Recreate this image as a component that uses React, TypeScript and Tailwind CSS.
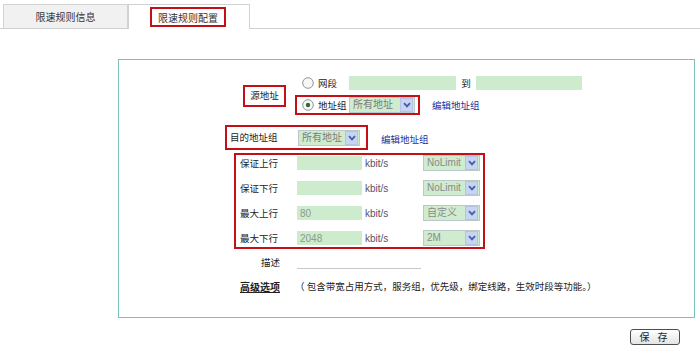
import React from 'react'

const font = { fontFamily: '"Noto Sans CJK SC", "Liberation Sans", sans-serif' }

function Radio({ checked }: { checked?: boolean }) {
  return (
    <svg width="12" height="12" viewBox="0 0 12 12" className="shrink-0">
      <circle cx="6" cy="6" r="5.3" fill="#f7f7f7" stroke="#7d8a96" strokeWidth="0.9" />
      {checked && <circle cx="6" cy="6" r="2.2" fill="#2f6b2f" />}
    </svg>
  )
}

function Select({ value, width, gray }: { value: string; width: string; gray?: boolean }) {
  return (
    <div className={`flex items-center h-[16px] bg-[#cfeccf] border border-[#b9c9c9] ${width}`}>
      <span className={`flex-1 pl-[3px] text-[10px] leading-none ${gray ? 'text-[#8a8a8a]' : 'text-[#7a7a7a]'}`} style={{ fontFamily: '"Liberation Sans", "Noto Sans CJK SC", sans-serif' }}>
        {value}
      </span>
      <span className="flex items-center justify-center w-[13px] h-[14px] mr-px bg-[#c9d5f0] border border-[#b4c3e4]">
        <svg width="8" height="6" viewBox="0 0 8 6">
          <polyline points="1,1.2 4,4.4 7,1.2" fill="none" stroke="#3f5fae" strokeWidth="1.8" />
        </svg>
      </span>
    </div>
  )
}

function RateRow({ label, value, sel }: { label: string; value: string; sel: string }) {
  return (
    <div className="flex items-center h-[16px]">
      <span className="ml-[4px] w-[57px] text-[9.5px] text-[#222]">{label}</span>
      <div className="w-[65px] h-[14px] bg-[#cdebcd] flex items-center pl-[3px] text-[10px] text-[#8c9c8c]" style={{ fontFamily: '"Liberation Sans", sans-serif' }}>
        {value}
      </div>
      <span className="ml-[3px] w-[58px] text-[10px] text-[#5a4f6a]" style={{ fontFamily: '"Liberation Sans", sans-serif' }}>
        kbit/s
      </span>
      <Select value={sel} width="w-[57px]" gray />
    </div>
  )
}

export default function App() {
  return (
    <div className="w-[700px] h-[348px] bg-white overflow-hidden text-[#222]" style={font}>
      {/* Tabs */}
      <div className="flex items-end h-[29px] pl-[3px] border-b border-[#cfcfcf]">
        <div className="w-[125px] h-[24px] bg-[#f1f1f1] border border-b-0 border-[#d2d2d2] flex items-center justify-center text-[10px] text-[#333]">
          限速规则信息
        </div>
        <div className="w-[122px] h-[25px] -mb-px bg-white border border-b-0 border-[#d2d2d2] flex items-start pt-[2px] pl-[21px]">
          <div className="w-[76px] h-[20px] border-2 border-[#c40f16] flex items-center justify-center text-[10px] text-[#333]">
            限速规则配置
          </div>
        </div>
      </div>

      {/* Panel */}
      <div className="ml-[118px] mt-[30px] w-[577px] h-[259px] border border-[#79c2b9] flex flex-col">
        {/* Source address */}
        <div className="flex items-center mt-[16px]">
          <div className="ml-[124px] w-[43px] h-[22px] border-2 border-[#c40f16] flex items-center justify-center text-[9.5px]">
            源地址
          </div>
          <div className="ml-[9px] flex flex-col">
            <div className="flex items-center h-[14px] pl-[7px]">
              <div className="w-[47px] flex items-center gap-[4px] text-[9.5px]">
                <Radio />
                <span>网段</span>
              </div>
              <div className="w-[107px] h-[14px] bg-[#cdebcd]" />
              <span className="w-[20px] text-center text-[9.5px]">到</span>
              <div className="w-[106px] h-[14px] bg-[#cdebcd]" />
            </div>
            <div className="flex items-center mt-[5px]">
              <div className="w-[125px] h-[20px] border-2 border-[#c40f16] flex items-center pl-[5px]">
                <div className="w-[47px] flex items-center gap-[4px] text-[9.5px]">
                  <Radio checked />
                  <span>地址组</span>
                </div>
                <Select value="所有地址" width="w-[66px]" />
              </div>
              <a className="ml-[12px] text-[9.5px] text-[#23319a]">编辑地址组</a>
            </div>
          </div>
        </div>

        {/* Destination */}
        <div className="flex items-center mt-[10px]">
          <div className="ml-[106px] w-[143px] h-[25px] border-2 border-[#c40f16] flex items-center pl-[3px]">
            <span className="w-[68px] text-[9.5px]">目的地址组</span>
            <Select value="所有地址" width="w-[62px]" />
          </div>
          <a className="ml-[13px] mt-[3px] text-[9.5px] text-[#23319a]">编辑地址组</a>
        </div>

        {/* Rates */}
        <div className="ml-[115px] mt-[3px] w-[251px] h-[96px] border-2 border-[#c40f16] flex flex-col gap-[9px]">
          <RateRow label="保证上行" value="" sel="NoLimit" />
          <RateRow label="保证下行" value="" sel="NoLimit" />
          <RateRow label="最大上行" value="80" sel="自定义" />
          <RateRow label="最大下行" value="2048" sel="2M" />
        </div>

        {/* Description */}
        <div className="flex items-center h-[16px] mt-[5px]">
          <span className="ml-[101px] w-[60px] text-right text-[9.5px]">描述</span>
          <div className="ml-[17px] w-[124px] self-end mb-[1px] border-b border-[#c8c8c8]" />
        </div>

        {/* Advanced */}
        <div className="flex items-center h-[16px] mt-[8px]">
          <span className="ml-[101px] w-[60px] text-right text-[10px] font-bold underline">高级选项</span>
          <span className="ml-[15px] text-[9.5px] text-[#222]">（ 包含带宽占用方式，服务组，优先级，绑定线路，生效时段等功能。）</span>
        </div>
      </div>

      {/* Save */}
      <div className="flex justify-end pr-[20px] mt-[11px]">
        <button className="w-[50px] h-[16px] rounded-[3px] border border-[#4d4d4d] bg-gradient-to-b from-white to-[#e4e4e4] text-[10px] leading-none text-[#222] tracking-[3px]">
          保 存
        </button>
      </div>
    </div>
  )
}
